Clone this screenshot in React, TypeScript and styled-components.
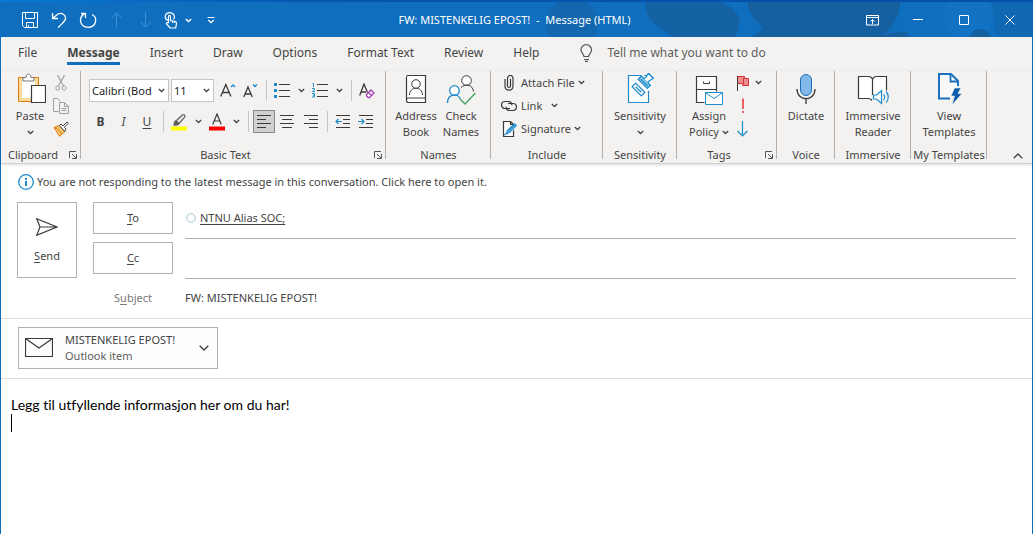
import React from 'react';
import styled, { createGlobalStyle, css } from 'styled-components';

const ink = '#444444';
const dark = '#3b3a39';
const blue = '#1e8bcd';
const accent = '#106ebe';
const line = '#b3b0ad';

const GlobalStyle = createGlobalStyle`
  *, *::before, *::after { box-sizing: border-box; }
  body { margin: 0; background: #fff; }
  body, button, input, select {
    font-family: "Noto Sans", "Open Sans", sans-serif;
    font-size: 11px;
    line-height: 16px;
    color: ${ink};
  }
  button, input, select { margin: 0; padding: 0; border: 0; border-radius: 0; background: none; outline: none; }
  svg { display: block; flex: none; }
  u { text-underline-offset: 2px; }
`;

const Window = styled.div`
  display: flex;
  flex-direction: column;
  min-height: 100vh;
  border: solid ${accent};
  border-width: 0 1px;
`;

/* Title bar */

const TitleBar = styled.header`
  position: relative;
  display: grid;
  grid-template-columns: 1fr auto 1fr;
  align-items: center;
  height: 37px;
  margin: 0 -1px;
  padding-top: 3px;
  overflow: hidden;
  background: linear-gradient(90deg, #0a7ad2, #0455b0 30%, #0550aa) top / 100% 2px no-repeat, #106ebe;
  color: #fff;
`;

const Skyline = styled.svg`
  position: absolute;
  top: 2px;
  right: 0;
`;

const Title = styled.h1`
  position: relative;
  margin: 0;
  padding-right: 4px;
  font-size: 11px;
  font-weight: 400;
  white-space: pre;
`;

const QuickAccess = styled.div`
  display: flex;
  padding-left: 15px;
`;

const QuickButton = styled.button<{ $width?: number }>`
  display: flex;
  align-items: center;
  justify-content: center;
  width: ${(p) => p.$width ?? 29}px;
  height: 34px;
  color: #fff;
  &:disabled { color: #3f8fd6; }
`;

const WindowButtons = styled.div`
  position: relative;
  display: flex;
  justify-content: flex-end;
`;

/* Tabs */

const TabRow = styled.nav`
  display: flex;
  align-items: center;
  gap: 30px;
  height: 34px;
  padding: 0 0 2px 17px;
  background: #f3f2f1;
`;

const Tab = styled.button<{ $active?: boolean }>`
  height: 24px;
  font-size: 12px;
  border-bottom: 3px solid transparent;
  padding-top: 2px;
  ${(p) =>
    p.$active &&
    css`
      font-weight: 700;
      border-bottom-color: ${accent};
    `}
`;

const TellMe = styled.label`
  display: flex;
  align-items: center;
  gap: 14px;
  flex: 1;
  padding-left: 11px;
`;

const TellMeInput = styled.input`
  flex: 1;
  min-width: 0;
  font-size: 12px;
  &::placeholder { color: #605e5c; opacity: 1; }
`;

/* Ribbon */

const Ribbon = styled.div`
  display: flex;
  height: 93px;
  background: #f3f2f1;
  border-bottom: 1px solid #d2d0ce;
  box-shadow: 0 1px 3px rgba(0, 0, 0, 0.14);
`;

const Group = styled.section<{ $width: number }>`
  display: flex;
  flex-direction: column;
  flex: none;
  width: ${(p) => p.$width}px;
  background: linear-gradient(${line}, ${line}) right top / 1px 88px no-repeat;
`;

const GroupBody = styled.div<{ $left?: number; $center?: boolean }>`
  display: flex;
  height: 76px;
  padding-left: ${(p) => p.$left ?? 0}px;
  ${(p) => p.$center && 'justify-content: center;'}
`;

const GroupFooter = styled.footer`
  display: flex;
  align-items: center;
  gap: 4px;
  height: 16px;
  > button { margin-right: 4px; }
`;

const GroupTitle = styled.h2`
  flex: 1;
  margin: 0;
  font-size: 11px;
  font-weight: 400;
  text-align: center;
  white-space: nowrap;
`;

const BigButton = styled.button<{ $width: number }>`
  display: flex;
  flex-direction: column;
  align-items: center;
  width: ${(p) => p.$width}px;
  height: 72px;
  padding-top: 2px;
  white-space: nowrap;
  > svg:first-child { margin-bottom: 3px; }
`;

const LabelLine = styled.span`
  display: flex;
  align-items: center;
  justify-content: center;
  gap: 3px;
  height: 16px;
`;

const IconColumn = styled.div`
  display: flex;
  flex-direction: column;
`;

const SmallButton = styled.button`
  display: flex;
  align-items: center;
  gap: 3px;
  height: 23px;
  white-space: nowrap;
`;

const IconSlot = styled.span`
  display: flex;
  justify-content: center;
  width: 18px;
`;

const FormatRows = styled.div`
  display: flex;
  flex-direction: column;
  gap: 8px;
  padding-top: 8px;
`;

const FormatRow = styled.div`
  display: flex;
  align-items: center;
  height: 23px;
`;

const FormatButton = styled.button<{ $width: number; $pressed?: boolean }>`
  display: flex;
  align-items: center;
  justify-content: center;
  width: ${(p) => p.$width}px;
  height: 23px;
  font-size: 12px;
  ${(p) => p.$pressed && 'background: #d2d0ce; outline: 1px solid #8a8886; outline-offset: -1px;'}
`;

const Bar = styled.span`
  width: 1px;
  height: 21px;
  margin: 0 4px;
  background: #c8c6c4;
`;

const SelectBox = styled.span<{ $width: number }>`
  display: grid;
  grid-template-columns: 1fr 14px;
  align-items: center;
  width: ${(p) => p.$width}px;
  height: 23px;
  margin-right: 2px;
  border: 1px solid #c8c6c4;
  background: #fff;
  > select { grid-area: 1 / 1 / 2 / 3; }
  > svg { grid-area: 1 / 2; justify-self: center; pointer-events: none; }
`;

const Select = styled.select`
  appearance: none;
  width: 100%;
  height: 21px;
  padding: 0 14px 0 2px;
  color: #201f1e;
`;

const Collapse = styled.button`
  align-self: flex-end;
  margin-left: auto;
  padding: 0 9px 4px;
`;

/* Message header */

const InfoBar = styled.a`
  display: flex;
  align-items: center;
  gap: 3px;
  padding: 10px 17px 12px;
  color: ${ink};
  text-decoration: none;
`;

const Addressing = styled.div`
  display: flex;
  gap: 16px;
  padding: 0 16px;
`;

const SendButton = styled.button`
  display: flex;
  flex-direction: column;
  align-items: center;
  justify-content: center;
  gap: 12px;
  width: 60px;
  height: 76px;
  padding-top: 2px;
  border: 1px solid ${line};
`;

const FieldRows = styled.div`
  flex: 1;
  display: grid;
  grid-template-columns: 80px 1fr;
  grid-template-rows: 40px 40px 32px;
  column-gap: 12px;
`;

const FieldButton = styled.button`
  height: 32px;
  border: 1px solid ${line};
`;

const Field = styled.div`
  display: flex;
  align-items: center;
  gap: 4px;
  height: 37px;
  padding: 0 1px 5px;
  border-bottom: 1px solid ${line};
`;

const Recipient = styled.a`
  color: ${ink};
  text-underline-offset: 2px;
`;

const TextInput = styled.input`
  width: 100%;
`;

const SubjectLabel = styled.label`
  align-self: center;
  text-align: center;
  color: #797775;
`;

const Attachments = styled.div`
  margin-top: 4px;
  padding: 8px 17px 9px;
  border: solid #e1dfdd;
  border-width: 1px 0;
`;

const AttachmentCard = styled.button`
  display: flex;
  align-items: center;
  gap: 12px;
  width: 200px;
  height: 42px;
  padding: 0 8px 0 6px;
  border: 1px solid ${line};
  background: #fdfdfd;
  text-align: left;
`;

const AttachmentText = styled.span`
  flex: 1;
  display: flex;
  flex-direction: column;
  white-space: nowrap;
`;

const Muted = styled.span`
  color: #605e5c;
`;

const Body = styled.main`
  flex: 1;
  padding: 17px 10px;
  font-family: Lato, "Noto Sans", sans-serif;
  font-size: 14px;
  line-height: 18px;
  font-variant-ligatures: none;
  color: #000;
`;

const Paragraph = styled.p`
  margin: 0;
`;

const Caret = styled.span`
  display: block;
  width: 1px;
  height: 18px;
  background: #000;
`;

/* Icons */

type IconProps = { w?: number; h?: number; children: React.ReactNode; stroke?: string };
const Icon = ({ w = 16, h = 16, stroke = dark, children }: IconProps) => (
  <svg width={w} height={h} viewBox={`0 0 ${w} ${h}`} fill="none" stroke={stroke} strokeWidth="1" aria-hidden="true">
    {children}
  </svg>
);

const Chevron = ({ big }: { big?: boolean }) =>
  big ? (
    <Icon w={10} h={6} stroke="#444"><path d="M.7 .7 5 5 9.3 .7" strokeWidth="1.4" /></Icon>
  ) : (
    <Icon w={7} h={5} stroke="currentColor"><path d="M.8 1 3.5 3.5 6.2 1" strokeWidth="1.3" /></Icon>
  );

const Launcher = ({ label }: { label: string }) => (
  <button aria-label={label}>
    <Icon w={8} h={8} stroke="#555"><path d="M.5 7V.5H7M3 3l4 4M7.5 3v4.5H3" /></Icon>
  </button>
);

const PasteIcon = () => (
  <Icon w={32} h={32}>
    <g transform="translate(4 0)">
      <path d="M2.500 6.500h16v20h-16z" fill="#fff" stroke="#f8dc9c" strokeWidth="3" />
      <path d="M.5 4.500h20v24H.5z" stroke="#e07a10" />
      <path d="M5 8V4.500h3C8 0 13 0 13 4.500h3V8z" fill="#fff" stroke="#777" />
      <path d="M13.500 12.500h14v17h-14z" fill="#fff" strokeWidth="1.200" />
    </g>
  </Icon>
);

const CutIcon = () => (
  <Icon stroke="#a19f9d">
    <path d="M4.500 0 10.500 11M11.500 0 5.500 11" strokeWidth="1.2" />
    <circle cx="4.800" cy="13" r="2" /><circle cx="11.200" cy="13" r="2" />
  </Icon>
);

const CopyIcon = () => (
  <Icon stroke="#a19f9d">
    <path d="M5.500 13.500h-5V.500h4l3 3M6.500 4.500h5l4 4v7h-9zM11.500 4.500v4h4M8.500 10.500h5M8.500 12.500h5" />
  </Icon>
);

const PainterIcon = () => (
  <Icon>
    <path d="M1 6.500 6.500 4.500 12 10.500 6.500 15.200z" fill="#f6c66b" stroke="#e07a10" />
    <path d="M4 7.500 9 13M1 6.500l3 1M6.500 15 9 13" stroke="#e07a10" />
    <path d="M6.500 4.500 8 3l2 2 4-4 1.300 1.300-4 4L13 8l-1.500 2.500z" fill="#fff" />
  </Icon>
);

const Grow = ({ down }: { down?: boolean }) => (
  <Icon>
    <path d={down ? 'M.800 14 5 4l4.200 10M2.300 11h5.500' : 'M.700 13.500 5.800 1.500l5.100 12M2.500 9.500h6.600'} strokeWidth="1.300" />
    <path d={down ? 'M10 1.500l2 2 2-2' : 'M11 4l2-2 2 2'} stroke={blue} strokeWidth="1.300" />
  </Icon>
);

const BulletIcon = () => (
  <Icon>
    <path d="M0 1.500h3M0 7.500h3M0 13.500h3" stroke={blue} strokeWidth="3" />
    <path d="M5 1.500h11M5 7.500h11M5 13.500h11" />
  </Icon>
);

const NumberIcon = () => (
  <Icon>
    <path d="M.500.500h1V4M0 5.500h2.500v1.300L.500 8.500h2.300M0 10.500h2.500v3.500H0M.800 12.200h1.700" stroke={blue} />
    <path d="M5 1.500h11M5 7.500h11M5 13.500h11" />
  </Icon>
);

const ClearIcon = () => (
  <Icon>
    <path d="M.700 12.500 5 1l3.500 8.500M2 9h5" strokeWidth="1.300" />
    <path d="M7.500 11.500 12 7l3 3-4.500 4.500h-1.300l-1.700-1.700zM9.500 9.500l3 3" fill="#fff" stroke="#a33fb0" strokeWidth="1.300" />
  </Icon>
);

const HighlightIcon = () => (
  <Icon h={18}>
    <path d="M0 15.500h16" stroke="#ffff00" strokeWidth="4" />
    <path d="M3 12c0-3 1.500-4.500 2.500-4.500L11 2.300c2-1.800 4 0 2.500 2L8.500 10c-1 2-3 2.500-5.500 2z" fill="#e4e2e0" stroke="#605e5c" strokeWidth="1.200" />
    <path d="M3 12c0-3 1.500-4.500 2.500-4.500l3 2.500c-1 2-3 2.500-5.500 2z" fill="#605e5c" stroke="none" />
  </Icon>
);

const FontColorIcon = () => (
  <Icon h={18}>
    <path d="M0 15.500h16" stroke="#ff0000" strokeWidth="4" />
    <path d="M3.700 11.500 8 1l4.300 10.500M5.300 8h5.400" strokeWidth="1.200" />
  </Icon>
);

const AlignIcon = ({ d }: { d: string }) => <Icon><path d={d} /></Icon>;

const IndentIcon = ({ more }: { more?: boolean }) => (
  <Icon>
    <path d="M1 1.500h14M8 5.500h7M8 9.500h7M1 13.500h14" />
    <path d={more ? 'M0 7.500h6M3.500 5 6 7.500 3.500 10' : 'M1 7.500h6M3.500 5 1 7.500 3.500 10'} stroke={blue} strokeWidth="1.200" />
  </Icon>
);

const AddressBookIcon = () => (
  <Icon w={22} h={32}>
    <path d="M2.500 2.500h18v27h-17c-1.500 0-2-1-2-2V4.500c0-1.200.500-2 1-2zM1.500 26.500c0-1 1-1.500 2-1.500h17" fill="#fff" strokeWidth="1.200" />
    <circle cx="11" cy="11" r="4.300" /><path d="M4.500 22c0-9 13-9 13 0" />
  </Icon>
);

const CheckNamesIcon = () => (
  <Icon w={30} h={32}>
    <circle cx="20.500" cy="7.500" r="4.800" fill="#fff" /><path d="M15 14.500c4-4 12-3 12.500 4" />
    <circle cx="8.500" cy="17.500" r="4.800" fill="#fff" stroke={blue} strokeWidth="1.300" />
    <path d="M1.500 30c0-10 11-10 13-3.500" stroke={blue} strokeWidth="1.300" />
    <path d="M14.500 26.500 19 31 29.500 20" stroke="#3fa35a" strokeWidth="1.300" />
  </Icon>
);

const ClipIcon = () => (
  <Icon><path d="M4 4v7c0 5.500 8 5.500 8 0V3.500C12-.500 6.500-.500 6.500 3.500V11c0 2 3 2 3 0V4" strokeWidth="1.200" /></Icon>
);

const LinkIcon = () => (
  <Icon>
    <path d="M9 10.500H4a3.500 3.500 0 0 1 0-7h3.500c2 0 3.500 1.500 3.300 3.700M7 5.500h5a3.500 3.500 0 0 1 0 7H8.500C6.500 12.500 5 11 5.200 8.800" strokeWidth="1.200" />
  </Icon>
);

const SignatureIcon = () => (
  <Icon>
    <path d="M2.500 .500h7l3 3V15.500h-10zM9.500.500v3h3" fill="#fff" strokeWidth="1.200" />
    <path d="M4 13.500l2-1L15 4" stroke="#fff" strokeWidth="4" />
    <path d="M5 13 6.500 9.500 13.500 2.800l1.800 1.800L8.300 11.500zM7 10l7-6.500M3 14l2-1" stroke={blue} fill="#9fd0ee" strokeWidth="1.200" />
  </Icon>
);

const SensitivityIcon = () => (
  <Icon w={30} h={32} stroke={blue}>
    <path d="M3.500 2.500h20v27h-20z" fill="#fff" strokeWidth="1.200" />
    <g transform="translate(13.500 16.500) rotate(45)">
      <path d="M-8-14h16v18h-16z" fill="#fff" stroke="none" />
      <path d="M-6.500-2.500h13v5h-13zM-4 0h8" strokeWidth="1.300" />
      <path d="M-7.500-11.500h13v4.500h-13zM-6-9h10" fill="#9fd0ee" strokeWidth="1.300" />
      <path d="M-3.500-11.500v-2.500l-1-4.500h7l-1 4.500v2.500" fill="#fff" strokeWidth="1.300" />
    </g>
  </Icon>
);

const PolicyIcon = () => (
  <Icon w={28} h={32}>
    <path d="M9.500 29.500h-8v-26h20v15M1.500 16.500h20" fill="#fff" strokeWidth="1.200" />
    <path d="M8.500 8.500v2h6v-2" />
    <path d="M10.500 19.500h17v12h-17z" fill="#fff" stroke={blue} />
    <path d="M11 20l8 5.500 8-5.500" stroke={blue} />
  </Icon>
);

const FlagIcon = () => (
  <Icon>
    <path d="M2.500 1.500h7v2h4v7h-6v-2h-5z" fill="#f58a8a" stroke="#d13438" /><path d="M8.500 3v6" stroke="#d13438" />
    <path d="M2.500 1v15" />
  </Icon>
);

const ImportantIcon = () => (
  <Icon stroke="#f0605f"><path d="M8 .500v10.500M8 13v2" strokeWidth="2" /></Icon>
);

const LowIcon = () => (
  <Icon stroke={blue}><path d="M7.500 0v15M2.500 10l5 5 5-5" strokeWidth="1.200" /></Icon>
);

const MicIcon = () => (
  <Icon w={20} h={32}>
    <rect x="4.500" y="1.500" width="11" height="21" rx="5.500" fill="#83b9ea" stroke="#1a6fba" />
    <path d="M1 16c0 13 18 13 18 0M10 25.500v5.500" strokeWidth="1.300" />
  </Icon>
);

const ReaderIcon = () => (
  <Icon w={32} h={32}>
    <path d="M15.500 28c-1-2-3-2.500-4.500-2.500H1.500v-22H11c2 0 4 1 4.500 3 .5-2 2.500-3 4.500-3h9.500v14M15.500 6.500V24" fill="#fff" strokeWidth="1.200" />
    <path d="M16 23h3.500l6-5v14h-1l-5-4.500H16z" fill="#fff" stroke="#f3f2f1" strokeWidth="2" />
    <path d="M16.500 22h3l5-4.500v13l-5-4.500h-3zM26.500 21.500c1.500 1.500 1.500 4 0 5.500M29 18.500c3 3 3 8 0 11" stroke={blue} strokeWidth="1.200" />
  </Icon>
);

const TemplatesIcon = () => (
  <Icon w={26} h={32} stroke="#1a6fc0">
    <path d="M14 25.500H3V1h12l7 7v5" fill="#f9f9f9" strokeWidth="2" /><path d="M14.500 2v6.500H21" strokeWidth="1.800" />
    <path d="M18.500 15H25l-3 5.500h4L16 32l2.500-9h-3.500z" fill="#0a5ca8" stroke="#f3f2f1" strokeWidth=".6" />
  </Icon>
);

const BulbIcon = () => (
  <Icon w={13} h={18} stroke="#555">
    <path d="M4 12.500C4 10 1 9 1 6a5.300 5.300 0 0 1 10.600 0c0 3-3 4-3 6.500zM4 15.500h5M5 17.400h3" strokeWidth="1.200" />
  </Icon>
);

const BigIconButton = ({ icon, lines, width, arrow }: { icon: React.ReactNode; lines: string[]; width: number; arrow?: 'below' | 'inline' }) => (
  <BigButton $width={width}>
    {icon}
    {lines.map((text, i) => (
      <LabelLine key={text}>
        {text}
        {arrow === 'inline' && i === lines.length - 1 && <Chevron />}
      </LabelLine>
    ))}
    {arrow === 'below' && <LabelLine><Chevron /></LabelLine>}
  </BigButton>
);

const RibbonGroup = ({ title, width, left, center, launcher, children }: { title: string; width: number; left?: number; center?: boolean; launcher?: boolean; children: React.ReactNode }) => (
  <Group $width={width}>
    <GroupBody $left={left} $center={center}>{children}</GroupBody>
    <GroupFooter>
      <GroupTitle>{title}</GroupTitle>
      {launcher && <Launcher label={`${title} settings`} />}
    </GroupFooter>
  </Group>
);

const tabs = ['File', 'Message', 'Insert', 'Draw', 'Options', 'Format Text', 'Review', 'Help'];

export default function App() {
  return (
    <Window>
      <GlobalStyle />
      <TitleBar>
        <Skyline width="505" height="35" viewBox="0 0 505 35" fill="#1560a0" aria-hidden="true">
          <circle cx="44" cy="22" r="26" opacity="0.5" />
          <path d="M118 0h75c20 8 22 20 14 35h-60c-18-8-32-20-29-35z" opacity="0.85" />
          <path d="M220 0h152c0 12-7 28-20 35H224c4-4 10-6 10-9 0-4-14-10-14-26z" />
          <path d="M345 35c12-2 26-7 34-5l2 5z" />
          <path d="M464 0h41v35h-34c-8-14-4-24-7-35z" opacity="0.4" />
          <circle cx="440" cy="14" r="25" fill="#1272c4" />
          <circle cx="452" cy="38" r="11" />
        </Skyline>
        <QuickAccess>
          <QuickButton aria-label="Save">
            <Icon stroke="currentColor"><path d="M.500.500h15v15H2.500l-2-2zM3.500.500v6h9v-6M4.500 15.500v-5h7v5M6.500 13v2" /></Icon>
          </QuickButton>
          <QuickButton aria-label="Undo">
            <Icon stroke="currentColor"><path d="M1.500 1v5.500H7M1.500 6.500 6 2.700c4-3.300 9 0 8.500 4-.3 2.500-2.500 4-7.500 9" strokeWidth="1.300" /></Icon>
          </QuickButton>
          <QuickButton aria-label="Redo">
            <Icon w={18} stroke="currentColor"><path d="M2 1.500h4.500V6M6 1.700C-1 5 .500 15.300 9 15.300c8.500 0 10-9.800 4-12.800" strokeWidth="1.300" /></Icon>
          </QuickButton>
          <QuickButton aria-label="Previous item" disabled>
            <Icon stroke="currentColor"><path d="M7.500 15.500V.700M2.500 6l5-5 5 5" /></Icon>
          </QuickButton>
          <QuickButton aria-label="Next item" disabled>
            <Icon stroke="currentColor"><path d="M7.500.500v14.800M2.500 10l5 5 5-5" /></Icon>
          </QuickButton>
          <QuickButton aria-label="Touch mode" $width={22}>
            <Icon w={14} h={17} stroke="currentColor">
              <path d="M4 8.500C-.500 6.500 1 .600 5.500.600S11.500 5 9.500 7.500M4.500 11V4.500c0-1.500 2-1.500 2 0V8.500l5 1c1 .3 1 1 1 2l-.8 4.500H6L2.300 11.500c.2-1.300 1.400-1.200 2.200-.3M8.500 9v2M10.500 9.500V11" strokeWidth="1.200" />
            </Icon>
          </QuickButton>
          <QuickButton aria-label="Touch mode options" $width={12}><Chevron /></QuickButton>
          <QuickButton aria-label="Customize toolbar" $width={34}>
            <Icon w={8} h={8} stroke="currentColor"><path d="M.500 1.500h7M1.300 4 4 6.700 6.700 4" strokeWidth="1.200" /></Icon>
          </QuickButton>
        </QuickAccess>
        <Title>{'FW: MISTENKELIG EPOST!  -  Message (HTML)'}</Title>
        <WindowButtons>
          <QuickButton aria-label="Ribbon display options" $width={46}>
            <Icon w={13} h={11} stroke="currentColor"><path d="M.500.500h12v9.500H.500zM.500 2.500h12M6.500 9V4.500M4.500 6.500l2-2 2 2" /></Icon>
          </QuickButton>
          <QuickButton aria-label="Minimize" $width={46}>
            <Icon w={10} h={10} stroke="currentColor"><path d="M0 4.500h10" /></Icon>
          </QuickButton>
          <QuickButton aria-label="Maximize" $width={46}>
            <Icon w={10} h={10} stroke="currentColor"><path d="M.500.500h9v9h-9z" /></Icon>
          </QuickButton>
          <QuickButton aria-label="Close" $width={46}>
            <Icon w={10} h={10} stroke="currentColor"><path d="M.500.500l9 9M9.500.500l-9 9" /></Icon>
          </QuickButton>
        </WindowButtons>
      </TitleBar>

      <TabRow>
        {tabs.map((name) => (
          <Tab key={name} $active={name === 'Message'}>{name}</Tab>
        ))}
        <TellMe>
          <BulbIcon />
          <TellMeInput aria-label="Tell me" placeholder="Tell me what you want to do" />
        </TellMe>
      </TabRow>

      <Ribbon>
        <RibbonGroup title="Clipboard" width={80} left={7} launcher>
          <BigIconButton icon={<PasteIcon />} lines={['Paste']} width={44} arrow="below" />
          <IconColumn>
            <SmallButton aria-label="Cut"><IconSlot><CutIcon /></IconSlot></SmallButton>
            <SmallButton aria-label="Copy"><IconSlot><CopyIcon /></IconSlot></SmallButton>
            <SmallButton aria-label="Format painter"><IconSlot><PainterIcon /></IconSlot></SmallButton>
          </IconColumn>
        </RibbonGroup>

        <RibbonGroup title="Basic Text" width={305} left={8} launcher>
          <FormatRows>
            <FormatRow>
              <SelectBox $width={80}>
                <Select aria-label="Font"><option>Calibri (Bod</option></Select>
                <Chevron />
              </SelectBox>
              <SelectBox $width={43}>
                <Select aria-label="Font size"><option>11</option></Select>
                <Chevron />
              </SelectBox>
              <FormatButton $width={23} aria-label="Grow font"><Grow /></FormatButton>
              <FormatButton $width={23} aria-label="Shrink font"><Grow down /></FormatButton>
              <Bar />
              <FormatButton $width={22} aria-label="Bullets"><BulletIcon /></FormatButton>
              <FormatButton $width={16} aria-label="Bullet options"><Chevron /></FormatButton>
              <FormatButton $width={22} aria-label="Numbering"><NumberIcon /></FormatButton>
              <FormatButton $width={16} aria-label="Numbering options"><Chevron /></FormatButton>
              <Bar />
              <FormatButton $width={22} aria-label="Clear formatting"><ClearIcon /></FormatButton>
            </FormatRow>
            <FormatRow>
              <FormatButton $width={23}><b>B</b></FormatButton>
              <FormatButton $width={23}><i>I</i></FormatButton>
              <FormatButton $width={24}><u>U</u></FormatButton>
              <Bar />
              <FormatButton $width={22} aria-label="Highlight"><HighlightIcon /></FormatButton>
              <FormatButton $width={16} aria-label="Highlight options"><Chevron /></FormatButton>
              <FormatButton $width={22} aria-label="Font color"><FontColorIcon /></FormatButton>
              <FormatButton $width={16} aria-label="Font color options"><Chevron /></FormatButton>
              <Bar />
              <FormatButton $width={22} $pressed aria-label="Align left"><AlignIcon d="M1 1.500h14M1 5.500h9M1 9.500h14M1 13.500h9" /></FormatButton>
              <FormatButton $width={24} aria-label="Center"><AlignIcon d="M1 1.500h14M3 5.500h10M1 9.500h14M3 13.500h10" /></FormatButton>
              <FormatButton $width={24} aria-label="Align right"><AlignIcon d="M1 1.500h14M6 5.500h9M1 9.500h14M6 13.500h9" /></FormatButton>
              <Bar />
              <FormatButton $width={22} aria-label="Decrease indent"><IndentIcon /></FormatButton>
              <FormatButton $width={24} aria-label="Increase indent"><IndentIcon more /></FormatButton>
            </FormatRow>
          </FormatRows>
        </RibbonGroup>

        <RibbonGroup title="Names" width={105} center>
          <BigIconButton icon={<AddressBookIcon />} lines={['Address', 'Book']} width={45} />
          <BigIconButton icon={<CheckNamesIcon />} lines={['Check', 'Names']} width={45} />
        </RibbonGroup>

        <RibbonGroup title="Include" width={112} left={9}>
          <IconColumn>
            <SmallButton><IconSlot><ClipIcon /></IconSlot>Attach File<Chevron /></SmallButton>
            <SmallButton><IconSlot><LinkIcon /></IconSlot>Link<IconSlot><Chevron /></IconSlot></SmallButton>
            <SmallButton><IconSlot><SignatureIcon /></IconSlot>Signature<Chevron /></SmallButton>
          </IconColumn>
        </RibbonGroup>

        <RibbonGroup title="Sensitivity" width={74} center>
          <BigIconButton icon={<SensitivityIcon />} lines={['Sensitivity']} width={70} arrow="below" />
        </RibbonGroup>

        <RibbonGroup title="Tags" width={100} left={7} launcher>
          <BigIconButton icon={<PolicyIcon />} lines={['Assign', 'Policy']} width={50} arrow="inline" />
          <IconColumn>
            <SmallButton aria-label="Follow up"><IconSlot><FlagIcon /></IconSlot><Chevron /></SmallButton>
            <SmallButton aria-label="High importance"><IconSlot><ImportantIcon /></IconSlot></SmallButton>
            <SmallButton aria-label="Low importance"><IconSlot><LowIcon /></IconSlot></SmallButton>
          </IconColumn>
        </RibbonGroup>

        <RibbonGroup title="Voice" width={58} center>
          <BigIconButton icon={<MicIcon />} lines={['Dictate']} width={50} />
        </RibbonGroup>

        <RibbonGroup title="Immersive" width={76} center>
          <BigIconButton icon={<ReaderIcon />} lines={['Immersive', 'Reader']} width={70} />
        </RibbonGroup>

        <RibbonGroup title="My Templates" width={76} center>
          <BigIconButton icon={<TemplatesIcon />} lines={['View', 'Templates']} width={70} />
        </RibbonGroup>

        <Collapse aria-label="Collapse ribbon">
          <Icon w={10} h={6} stroke="#444"><path d="M.700 5.300 5 1l4.300 4.300" strokeWidth="1.300" /></Icon>
        </Collapse>
      </Ribbon>

      <InfoBar href="#latest">
        <Icon stroke={blue}>
          <circle cx="8" cy="8" r="7.300" strokeWidth="1.300" />
          <path d="M8 4v2M8 7v5" strokeWidth="2" />
        </Icon>
        You are not responding to the latest message in this conversation. Click here to open it.
      </InfoBar>

      <Addressing>
        <SendButton>
          <Icon w={22} h={18}><path d="M.700.700 21 9 .700 17.300 4 9zM4 9h17" strokeWidth="1.200" /></Icon>
          <span><u>S</u>end</span>
        </SendButton>
        <FieldRows>
          <FieldButton><u>T</u>o</FieldButton>
          <Field>
            <Icon w={10} h={10} stroke="#a3c7d2"><circle cx="5" cy="5" r="4.300" /></Icon>
            <Recipient href="#recipient">NTNU Alias SOC;</Recipient>
          </Field>
          <FieldButton><u>C</u>c</FieldButton>
          <Field><TextInput aria-label="Cc" /></Field>
          <SubjectLabel htmlFor="subject">S<u>u</u>bject</SubjectLabel>
          <TextInput id="subject" defaultValue="FW: MISTENKELIG EPOST!" />
        </FieldRows>
      </Addressing>

      <Attachments>
        <AttachmentCard>
          <Icon w={28} h={20}><path d="M.500.500h27v18H.500zM.500.500 14 10 27.500.500" strokeWidth="1.200" /></Icon>
          <AttachmentText>
            <span>MISTENKELIG EPOST!</span>
            <Muted>Outlook item</Muted>
          </AttachmentText>
          <Chevron big />
        </AttachmentCard>
      </Attachments>

      <Body>
        <Paragraph>Legg til utfyllende informasjon her om du har!</Paragraph>
        <Caret />
      </Body>
    </Window>
  );
}
